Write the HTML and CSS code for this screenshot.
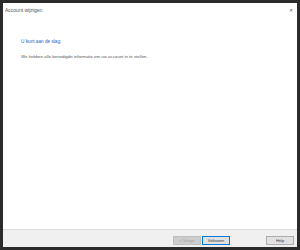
FILE: index.html
```html
<!DOCTYPE html>
<html lang="nl">
<head>
    <meta charset="UTF-8">
    <title>Account wijzigen</title>
    <link rel="stylesheet" href="styles.css">
</head>
<body>

    <div class="window">
        <!-- Title bar -->
        <div class="titlebar">
            <span class="title">Account wijzigen</span>
            <span class="close">&#x2715;</span>
        </div>

        <!-- Page content -->
        <div class="content">
            <h1>U kunt aan de slag.</h1>
            <p>We hebben alle benodigde informatie om uw account in te stellen.</p>
        </div>

        <!-- Buttons -->
        <div class="footer">
            <button class="btn" disabled>&lt; Vorige</button>
            <button class="btn primary">Voltooien</button>
            <button class="btn help">Help</button>
        </div>
    </div>

</body>
</html>
```

FILE: styles.css
```css
* {
    margin: 0;
    padding: 0;
    box-sizing: border-box;
}

body {
    width: 300px;
    height: 250px;
    background: #2b2b2b;
    font-family: "Liberation Sans", Arial, sans-serif;
    overflow: hidden;
}

.window {
    margin: 3px 3px 3px 3px;
    height: 244px;
    background: white;
    display: flex;
    flex-direction: column;
}

.titlebar {
    height: 13px;
    display: flex;
    align-items: center;
    justify-content: space-between;
    padding: 0 4px 0 2px;
    color: #555;
}

.titlebar .title {
    font-size: 5px;
    padding-top: 1px;
}

.titlebar .close {
    font-size: 5px;
    color: #666;
}

.content {
    flex: 1;
    padding: 23px 18px 0 18px;
}

.content h1 {
    font-size: 4.7px;
    font-weight: normal;
    color: #1a5fc8;
    margin-bottom: 10px;
}

.content p {
    font-size: 4.35px;
    color: #5a5a5a;
}

.footer {
    height: 18px;
    background: #f0f0f0;
    border-top: 1px solid #dcdcdc;
    display: flex;
    align-items: flex-start;
    padding: 6px 3px 0 170px;
}

.btn {
    width: 28px;
    height: 9px;
    font-family: inherit;
    font-size: 4px;
    background: #e1e1e1;
    color: #333;
    border: 1px solid #adadad;
    margin-right: 1px;
}

.btn:disabled {
    background: #cccccc;
    border-color: #bfbfbf;
    color: #a0a0a0;
}

.btn.primary {
    border-color: #0078d7;
}

.btn.help {
    margin-left: auto;
    margin-right: 0;
}
```
